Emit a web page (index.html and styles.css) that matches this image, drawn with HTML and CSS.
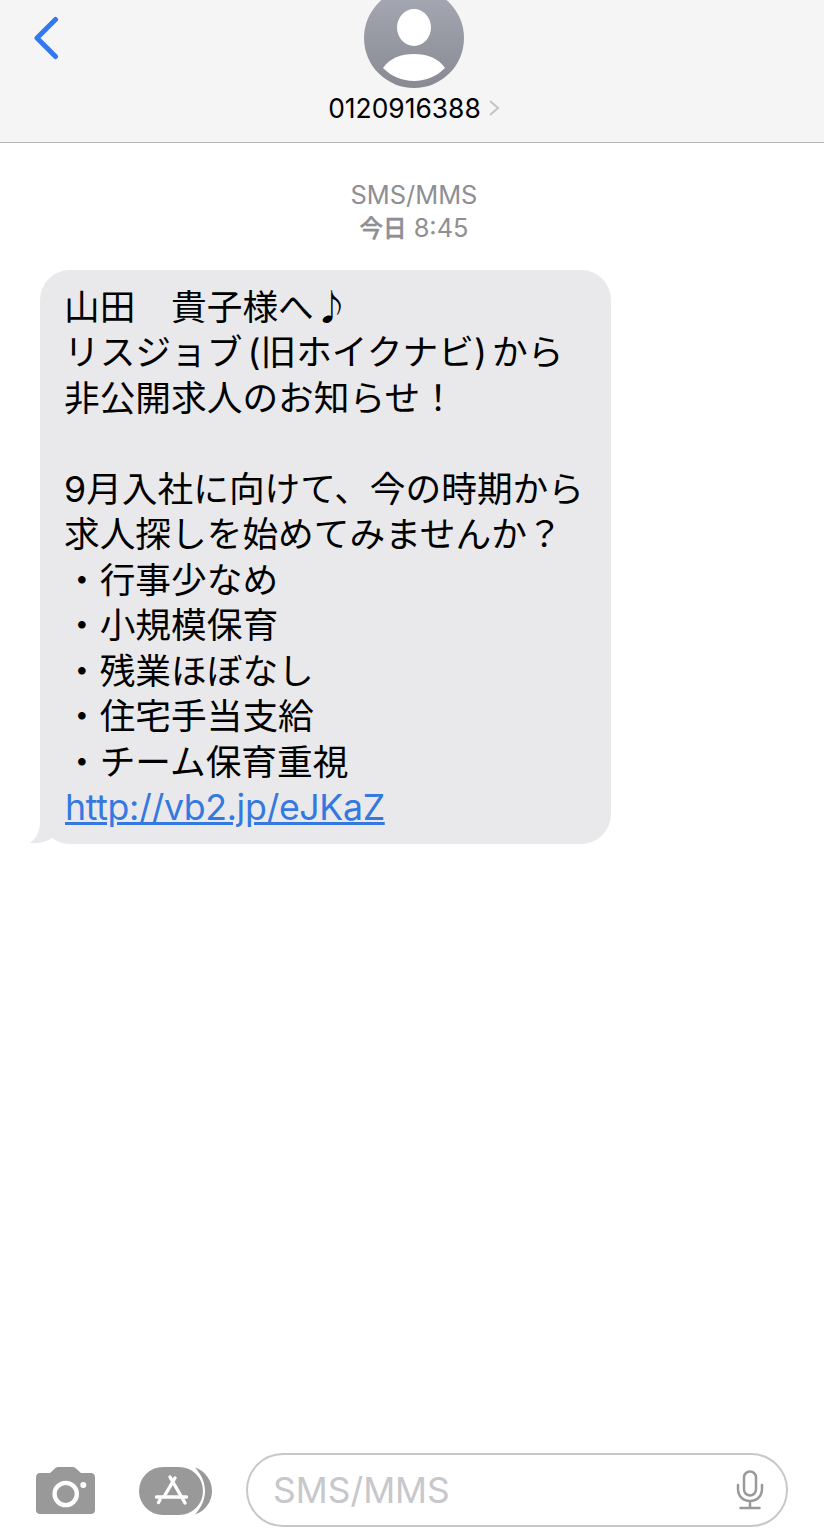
FILE: index.html
```html
<!DOCTYPE html>
<html lang="ja">
<head>
<meta charset="utf-8">
<title>SMS/MMS</title>
<link rel="stylesheet" href="styles.css">
</head>
<body>
<div class="page">
  <header class="nav">
    <svg class="back" width="28" height="44" viewBox="0 0 28 44"><path d="M24.500 3.500L6 22L24.500 40.500" fill="none" stroke="#3478f0" stroke-width="5" stroke-linecap="round" stroke-linejoin="round"/></svg>
    <svg class="avatar" width="100" height="100" viewBox="0 0 100 100">
      <defs><linearGradient id="ag" x1="0" y1="0" x2="0" y2="1"><stop offset="0" stop-color="#a7aab4"/><stop offset="1" stop-color="#878a93"/></linearGradient></defs>
      <circle cx="50" cy="50" r="50" fill="url(#ag)"/>
      <ellipse cx="50" cy="39.500" rx="17" ry="18.500" fill="#fff"/>
      <path d="M19 80C26 70 37 66 50 66C63 66 74 70 81 80C73 88 62 93 50 93C38 93 27 88 19 80Z" fill="#fff"/>
    </svg>
    <div class="contact">
      <span class="number">0120916388</span>
      <svg class="chev" width="12" height="18" viewBox="0 0 12 18"><path d="M2 2L10 9L2 16" fill="none" stroke="#c4c4c6" stroke-width="2"/></svg>
    </div>
  </header>
  <main class="thread">
    <div class="stamp">
      <div>SMS/MMS</div>
      <div><span class="day">今日</span> 8:45</div>
    </div>
    <div class="bubble">
      <svg class="tail" width="28" height="34" viewBox="0 0 28 34"><path d="M10 0V12C10 20 7 28 0 33C8 34 16 32 23 27.500L28 20V0Z" fill="#e9e9eb"/></svg>
      <p class="msg">山田　貴子様へ<span class="note">♪</span>
<span class="tight">リスジョブ (旧ホイクナビ) から</span>
非公開求人のお知らせ！

9月入社に向けて、今の時期から
求人探しを始めてみませんか？
・行事少なめ
・小規模保育
・残業ほぼなし
・住宅手当支給
・チーム保育重視
<a class="link" href="#">http://vb2.jp/eJKaZ</a></p>
    </div>
  </main>
  <footer class="bar">
    <svg class="cam" width="60" height="48" viewBox="0 0 60 48">
      <path fill-rule="evenodd" d="M4 6H14L19 1.500C20 .5 21 0 23 0H36C38 0 39 .5 40 1.500L45 6H55C57.500 6 59 8 59 10.500V43C59 45.500 57.500 47 55 47H4C1.500 47 0 45.500 0 43V10.500C0 8 1.500 6 4 6ZM29.700 13.700A13.300 13.300 0 1 0 29.700 40.300A13.300 13.300 0 1 0 29.700 13.700ZM29.700 18A9 9 0 1 1 29.700 36A9 9 0 1 1 29.700 18ZM47.300 15A3 3 0 1 0 47.300 21A3 3 0 1 0 47.300 15Z" fill="#999"/>
    </svg>
    <svg class="apps" width="74" height="48" viewBox="0 0 74 48">
      <path d="M56 .5C66 4 73 13 73 24C73 35 66 44 56 47.500C62 41 66 33 66 24C66 15 62 7 56 .5Z" fill="#999"/>
      <rect x="0" y="0" width="64" height="48" rx="24" fill="#999"/>
      <g fill="none" stroke="#fff" stroke-width="3.400" stroke-linecap="round">
        <path d="M31 10L46 36"/>
        <path d="M36 11L26 28"/>
        <path d="M17.500 30H47.500"/>
        <path d="M21 33L19.500 35.500"/>
      </g>
    </svg>
    <div class="input">
      <span class="placeholder">SMS/MMS</span>
      <svg class="mic" width="28" height="40" viewBox="0 0 28 40">
        <rect x="8" y="1.500" width="12" height="24" rx="6" fill="none" stroke="#999" stroke-width="2.500"/>
        <path d="M2 15V19C2 26 7 31 14 31C21 31 26 26 26 19V15M14 31V37.500M4.500 38H23.500" fill="none" stroke="#999" stroke-width="2.500" stroke-linecap="round"/>
      </svg>
    </div>
  </footer>
</div>
</body>
</html>
```
FILE: styles.css
```css
* { box-sizing: border-box; }
html, body { margin: 0; padding: 0; background: #fff; }
body { font-family: Inter, "Noto Sans CJK JP", sans-serif; color: #000; }
.page { width: 824px; height: 1535px; display: flex; flex-direction: column; overflow: hidden; }

.nav { position: relative; height: 143px; flex: none; background: #f5f5f5; border-bottom: 1px solid #b5b5b7; display: flex; flex-direction: column; align-items: center; padding-left: 4px; }
.back { position: absolute; left: 31px; top: 16px; }
.avatar { display: block; margin-top: -12px; flex: none; }
.contact { margin-top: 4px; height: 32px; display: flex; align-items: center; gap: 7px; }
.number { font-size: 26.400px; line-height: 32px; }
.chev { flex: none; }

.thread { flex: 1; display: flex; flex-direction: column; align-items: flex-start; padding: 35px 0 0 40px; }
.stamp { width: 748px; text-align: center; font-size: 25.400px; line-height: 33px; color: #8e8e93; }
.day { font-weight: 500; font-size: 23.500px; -webkit-text-stroke: 0.4px #8e8e93; }
.bubble { position: relative; margin-top: 25px; width: 571px; height: 574px; background: #e9e9eb; border-radius: 30px; padding: 12px 20px 0 24px; }
.tail { position: absolute; left: -10px; bottom: 0; }
.msg { position: relative; margin: 0; white-space: pre-wrap; font-size: 35.700px; line-height: 45.450px; }
.note { font-family: "Noto Sans CJK JP", sans-serif; }
.tight { word-spacing: -5px; }
.link { color: #3478e0; text-decoration: underline; letter-spacing: -0.360px; margin-left: 1px; }

.bar { flex: none; height: 82px; padding: 0 36px 8px; display: flex; align-items: center; }
.cam { flex: none; margin-top: 2px; }
.apps { flex: none; margin-top: 2px; margin-left: 43px; }
.input { margin-left: 33px; flex: none; width: 542px; height: 74px; border: 2px solid #c8c8c8; border-radius: 37px; display: flex; align-items: center; justify-content: space-between; padding: 0 22px 0 25px; }
.placeholder { font-size: 35.400px; color: #c7c7cc; }
.mic { flex: none; }
```
